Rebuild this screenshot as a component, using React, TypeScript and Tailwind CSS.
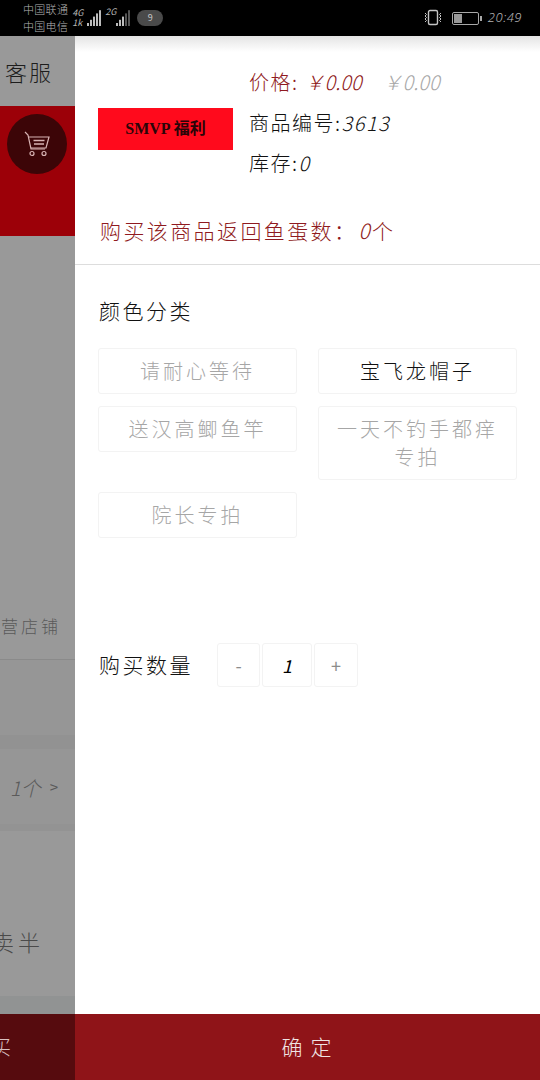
import React from 'react';

const cjk = '"Noto Sans CJK SC", "Noto Sans", sans-serif';

function Signal({ bars, dim = 0 }: { bars: number; dim?: number }) {
    return (
        <svg width="20" height="18" viewBox="0 0 20 18">
            {Array.from({ length: bars }).map((_, i) => (
                <rect
                    key={i}
                    x={1 + i * 3}
                    y={14 - i * 3.2}
                    width="2"
                    height={3 + i * 3.2}
                    fill={i >= bars - dim ? '#555' : '#bdbdbd'}
                />
            ))}
        </svg>
    );
}

function StatusBar() {
    return (
        <div className="h-9 bg-black flex items-center shrink-0 pl-[23px] pr-[18px] text-[#b5b5b5]">
            <div className="flex flex-col text-[11px] leading-[17px] font-light tracking-[0.3px]">
                <span>中国联通</span>
                <span>中国电信</span>
            </div>
            <div className="flex flex-col text-[9px] leading-[10px] ml-[4px] italic w-[14px]">
                <span>4G</span>
                <span>1k</span>
            </div>
            <Signal bars={5} />
            <span className="text-[9px] -ml-[1px] -mt-3 italic w-[10px]">2G</span>
            <Signal bars={5} dim={2} />
            <div className="ml-[2px] w-[26px] h-4 rounded-full bg-[#4a4a4a] flex items-center justify-center text-[9px] text-[#c8c8c8]">
                9
            </div>
            <div className="ml-auto flex items-center">
                <svg width="20" height="18" viewBox="0 0 20 18" fill="none" stroke="#c4c4c4">
                    <rect x="5.5" y="1.5" width="9" height="14" rx="1.5" strokeWidth="1.4" />
                    <path d="M2 4l1.5 1.5L2 7l1.5 1.5L2 10l1.5 1.5L2 13M18 4l-1.5 1.5L18 7l-1.5 1.5L18 10l-1.5 1.5L18 13" />
                </svg>
                <svg className="ml-[9px]" width="30" height="16" viewBox="0 0 30 16">
                    <rect x="0.5" y="2.5" width="26" height="12" rx="1.5" fill="none" stroke="#a8a8a8" />
                    <rect x="2" y="4" width="8" height="9" fill="#9a9a9a" />
                    <rect x="28" y="6" width="2" height="5" fill="#a8a8a8" />
                </svg>
                <span className="ml-[6px] text-[13px] italic font-light tracking-[0.5px]" style={{ fontFamily: '"Noto Sans", sans-serif' }}>20:49</span>
            </div>
        </div>
    );
}

function CartIcon() {
    return (
        <svg width="28" height="28" viewBox="0 0 28 28" fill="none" stroke="#d8b4b4" strokeWidth="1.2">
            <path d="M2 2l3 3 3 14h14" />
            <path d="M6 7h20l-3 11H8" />
            <path d="M10.5 10.5h11M11 14h10" strokeWidth="1.6" />
            <circle cx="9" cy="23.5" r="2" />
            <circle cx="21" cy="23.5" r="2" />
        </svg>
    );
}

function BackPage() {
    return (
        <div className="w-[75px] shrink-0 flex flex-col bg-[#999999] overflow-hidden">
            <div className="h-[70px] flex items-center pl-[5px] text-[22px] tracking-[2px] text-[#1d1d1d] font-light">客服</div>
            <div className="h-[130px] bg-[#9c0008] pt-2 pl-[7px]">
                <div className="w-[60px] h-[60px] rounded-full bg-[#3c0507] flex items-center justify-center">
                    <CartIcon />
                </div>
            </div>
            <div className="h-[424px] border-b border-[#8a8a8a] flex items-end justify-end pr-[14px] pb-[21px]">
                <span className="text-[17px] leading-6 whitespace-nowrap tracking-[3px] text-[#5a5a5a] font-light">自营店铺</span>
            </div>
            <div className="h-[75px] bg-[#969696]" />
            <div className="h-[14px] bg-[#929292]" />
            <div className="h-[75px] bg-[#969696] flex items-center justify-end pr-[17px] pt-[2px]">
                <span className="text-[20px] text-[#5a5a5a] font-light italic whitespace-nowrap">1个</span>
                <span className="text-[15px] text-[#5a5a5a] ml-[9px]">&gt;</span>
            </div>
            <div className="h-[7px] bg-[#939393]" />
            <div className="flex-1 flex items-center justify-end pr-[31px] pt-[54px]">
                <span className="text-[22px] leading-7 text-[#4a4a4a] font-light whitespace-nowrap tracking-[4px]">买卖半</span>
            </div>
            <div className="h-[18px] bg-[#919393]" />
            <div className="h-[66px] bg-[#560b0e] flex items-center justify-end pr-[64px]">
                <span className="text-[20px] text-[#d8c0c0] font-light whitespace-nowrap">购买</span>
            </div>
        </div>
    );
}

const options = [
    { label: '请耐心等待', active: false },
    { label: '宝飞龙帽子', active: true },
    { label: '送汉高鲫鱼竿', active: false },
    { label: '一天不钓手都痒专拍', active: false },
    { label: '院长专拍', active: false },
];

function OptionGrid() {
    return (
        <div className="grid grid-cols-[199px_199px] gap-x-[21px] gap-y-3 items-start mt-[21px]">
            {options.map((o) => (
                <div
                    key={o.label}
                    className={`border border-[#f3f3f3] rounded-[3px] text-center text-[20px] leading-[28px] tracking-[3px] px-2 py-[8px] font-light ${o.active ? 'text-[#111111]' : 'text-[#a6a6a6]'}`}
                >
                    {o.label}
                </div>
            ))}
        </div>
    );
}

function Sheet() {
    return (
        <div className="flex-1 flex flex-col bg-white relative">
            <div className="absolute top-0 left-0 right-0 h-4 bg-gradient-to-b from-[#e4e4e4] to-white" />
            <div className="relative flex flex-col flex-1 pl-[23px]">
                <div className="flex items-center gap-[16px] pt-[25px]">
                    <div
                        className="w-[135px] h-[42px] bg-[#ff0a1c] flex items-center justify-center text-[16px] font-bold text-[#2a0508] mt-[14px]"
                        style={{ fontFamily: '"Liberation Serif", "Noto Sans CJK SC", serif' }}
                    >
                        SMVP 福利
                    </div>
                    <div className="flex flex-col text-[20px] font-light tracking-[1.5px]">
                        <div className="h-[41px] flex items-center text-[#8f1a20] whitespace-nowrap">
                            价格:
                            <span className="italic tracking-normal ml-[6px]">￥0.00</span>
                            <span className="italic tracking-normal ml-[21px] text-[#a8a8a8]">￥0.00</span>
                        </div>
                        <div className="h-[41px] flex items-center text-[#111111]">商品编号:<span className="italic">3613</span></div>
                        <div className="h-[40px] flex items-center text-[#111111]">库存:<span className="italic">0</span></div>
                    </div>
                </div>
                <div className="-ml-[23px] pl-[25px] border-b border-[#dddddd] h-[82px] pt-[29px] text-[21px] leading-[36px] tracking-[2.4px] font-light text-[#8f1a20] whitespace-nowrap">
                    购买该商品返回鱼蛋数： <span className="italic -ml-[6px]">0</span>个
                </div>
                <div className="pt-[28px] pl-[1px] text-[21px] leading-[34px] tracking-[2.5px] font-light text-[#111111]">颜色分类</div>
                <OptionGrid />
                <div className="flex items-center mt-[105px]">
                    <span className="w-[119px] shrink-0 pl-[1px] text-[21px] tracking-[2.5px] font-light text-[#111111]">购买数量</span>
                    <div className="flex gap-[2px] h-[44px] text-[18px]">
                        <div className="w-[43px] border border-[#f3f3f3] rounded-[3px] flex items-center justify-center text-[#8c8c8c]">-</div>
                        <div className="w-[50px] border border-[#f3f3f3] rounded-[3px] flex items-center justify-center italic text-black">1</div>
                        <div className="w-[44px] border border-[#f3f3f3] rounded-[3px] flex items-center justify-center text-[#8c8c8c]">+</div>
                    </div>
                </div>
            </div>
            <div className="h-[66px] bg-[#8f1418] shrink-0 flex items-center justify-center text-[21px] tracking-[8px] text-[#f0e4e4] font-light pl-[6px]">
                确定
            </div>
        </div>
    );
}

export default function App() {
    return (
        <div className="w-[540px] h-[1080px] flex flex-col overflow-hidden" style={{ fontFamily: cjk }}>
            <StatusBar />
            <div className="flex-1 flex min-h-0">
                <BackPage />
                <Sheet />
            </div>
        </div>
    );
}
